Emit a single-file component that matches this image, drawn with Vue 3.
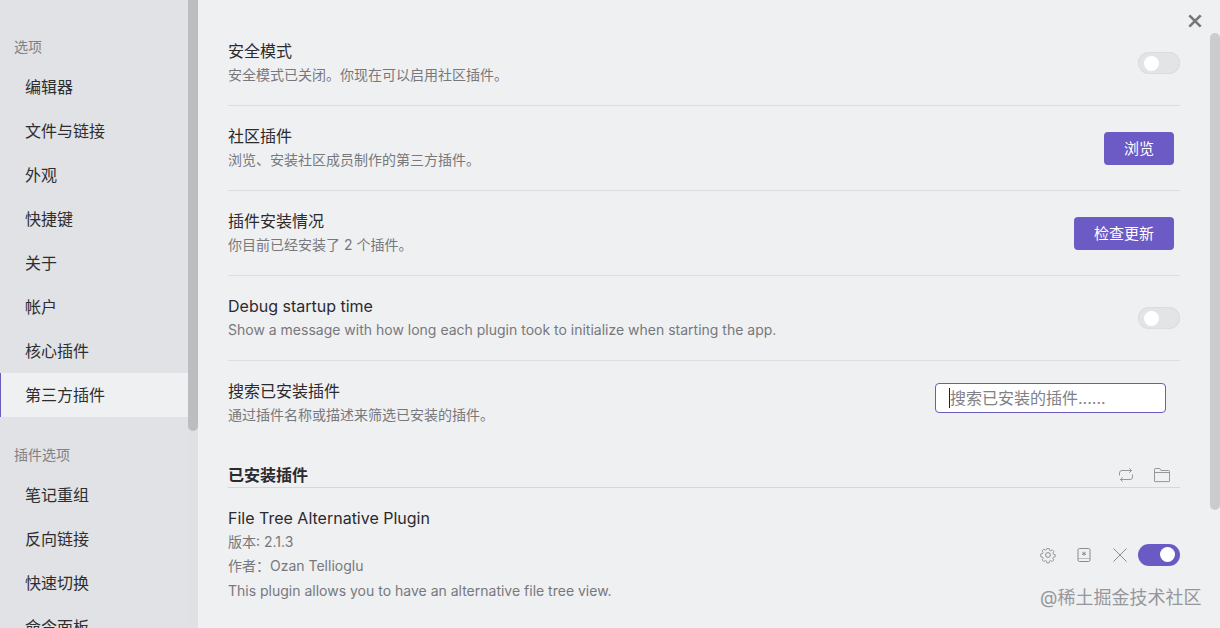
<script setup>
const options = ['编辑器', '文件与链接', '外观', '快捷键', '关于', '帐户', '核心插件', '第三方插件']
const pluginOptions = ['笔记重组', '反向链接', '快速切换', '命令面板']
const rows = [
  { title: '安全模式', desc: '安全模式已关闭。你现在可以启用社区插件。', kind: 'toggle' },
  { title: '社区插件', desc: '浏览、安装社区成员制作的第三方插件。', kind: 'button', label: '浏览' },
  { title: '插件安装情况', desc: '你目前已经安装了 2 个插件。', kind: 'button', label: '检查更新' },
  { title: 'Debug startup time', desc: 'Show a message with how long each plugin took to initialize when starting the app.', kind: 'toggle' },
  { title: '搜索已安装插件', desc: '通过插件名称或描述来筛选已安装的插件。', kind: 'search' }
]
</script>

<template>
  <div class="app">
    <aside class="side">
      <div class="group first">选项</div>
      <div v-for="o in options" :key="o" class="nav" :class="{ active: o === '第三方插件' }">{{ o }}</div>
      <div class="group second">插件选项</div>
      <div v-for="o in pluginOptions" :key="o" class="nav">{{ o }}</div>
    </aside>
    <div class="side-track"><div class="side-thumb"></div></div>
    <main class="main">
      <div v-for="r in rows" :key="r.title" class="row">
        <div class="info">
          <div class="title">{{ r.title }}</div>
          <div class="desc">{{ r.desc }}</div>
        </div>
        <div v-if="r.kind === 'toggle'" class="toggle"><span class="knob"></span></div>
        <button v-else-if="r.kind === 'button'" class="btn">{{ r.label }}</button>
        <div v-else class="search">
          <span class="caret"></span>
          <span class="placeholder">搜索已安装的插件......</span>
        </div>
      </div>
      <div class="heading">
        <span>已安装插件</span>
        <div class="heading-icons">
          <svg class="ic" viewBox="0 0 18 18" fill="none" stroke="#8b8c8f" stroke-width=".9">
            <path d="M2.5 9.5V7a2.5 2.5 0 0 1 2.5-2.5h9.5M12.3 2.3l2.2 2.2-2.2 2.2" />
            <path d="M15.5 8.5V11a2.5 2.5 0 0 1-2.5 2.5H3.5M5.7 15.7 3.5 13.5l2.2-2.2" />
          </svg>
          <svg class="ic" viewBox="0 0 18 18" fill="none" stroke="#8b8c8f" stroke-width=".9">
            <path d="M1.5 15V3.5a1 1 0 0 1 1-1h4.2l1.3 2h7.5a1 1 0 0 1 1 1V15a.6.6 0 0 1-.6.6H2.1a.6.6 0 0 1-.6-.6Z" />
            <path d="M1.5 6.5h15" />
          </svg>
        </div>
      </div>
      <div class="plugin">
        <div class="plugin-info">
          <div class="title">File Tree Alternative Plugin</div>
          <div class="meta">版本: 2.1.3</div>
          <div class="meta">作者：Ozan Tellioglu</div>
          <div class="meta">This plugin allows you to have an alternative file tree view.</div>
        </div>
        <div class="plugin-actions">
          <svg class="ic" viewBox="0 0 18 18" fill="none" stroke="#8b8c8f" stroke-width="1">
            <circle cx="9" cy="9" r="2.4" />
            <path d="M7.7 1.6h2.6l.4 2.1 1.3.6 1.8-1.2 1.9 1.9-1.2 1.8.6 1.3 2.1.4v2.6l-2.1.4-.6 1.3 1.2 1.8-1.9 1.9-1.8-1.2-1.3.6-.4 2.1H7.7l-.4-2.1-1.3-.6-1.8 1.2-1.9-1.9 1.2-1.8-.6-1.3-2.1-.4V7.7l2.1-.4.6-1.3-1.2-1.8 1.9-1.9L6 3.5l1.3-.6Z" transform="translate(1.1 1.1) scale(.878)" />
          </svg>
          <svg class="ic" viewBox="0 0 18 18" fill="none" stroke="#8b8c8f" stroke-width="1">
            <path d="M4.5 2.5h9a1.5 1.5 0 0 1 1.5 1.5v10a1.5 1.5 0 0 1-1.5 1.5h-9A1.5 1.5 0 0 1 3 14V4a1.5 1.5 0 0 1 1.5-1.5Z" />
            <path d="M3 12.5h12" stroke-opacity=".5" />
            <path d="M9 5.7v4M7.2 6.7l3.6 2M10.8 6.7l-3.6 2" />
          </svg>
          <svg class="ic" viewBox="0 0 18 18" fill="none" stroke="#8b8c8f" stroke-width="1">
            <path d="M2.5 2.5l13 13M15.5 2.5l-13 13" />
          </svg>
          <div class="toggle on"><span class="knob"></span></div>
        </div>
      </div>
    </main>
    <div class="main-track"><div class="main-thumb"></div></div>
    <svg class="close" viewBox="0 0 16 16" fill="none" stroke="#76777a" stroke-width="3">
      <path d="M1.5 1.5l13 13M14.5 1.5l-13 13" />
    </svg>
    <div class="mark">@稀土掘金技术社区</div>
  </div>
</template>

<style scoped>
.app {
  position: relative;
  display: flex;
  width: 1220px;
  height: 628px;
  overflow: hidden;
  background: #eff0f2;
  color: #2b2b2e;
  font-family: Inter, "Noto Sans CJK SC", sans-serif;
}
.side {
  flex: none;
  width: 188px;
  background: #e0e2e5;
  padding-top: 36px;
  box-sizing: border-box;
}
.group {
  height: 22px;
  line-height: 22px;
  padding-left: 14px;
  font-size: 14px;
  color: #808185;
}
.first { margin-bottom: 7px; }
.second { margin-top: 27px; margin-bottom: 7px; }
.nav {
  height: 44px;
  line-height: 44px;
  padding-left: 25px;
  font-size: 16px;
  color: #2e2e31;
}
.nav.active {
  background: #eff0f2;
  box-shadow: inset 1px 0 0 #6a5bbe;
}
.side-track {
  flex: none;
  width: 10px;
  background: #e0e1e4;
}
.side-thumb {
  height: 431px;
  background: #bcbdc0;
  border-radius: 0 0 5px 5px;
}
.main {
  flex: 1;
  min-width: 0;
  padding: 0 30px;
  box-sizing: border-box;
}
.row {
  height: 85px;
  display: flex;
  align-items: center;
  justify-content: space-between;
  box-sizing: border-box;
  border-bottom: 1px solid #dcdde0;
}
.row:first-child {
  height: 106px;
  padding-top: 21px;
}
.row:nth-child(5) {
  border-bottom: none;
  padding-bottom: 2px;
}
.title {
  font-size: 16px;
  line-height: 24px;
  color: #2b2b2e;
}
.desc {
  font-size: 14px;
  line-height: 24px;
  color: #77787c;
}
.toggle {
  flex: none;
  width: 42px;
  height: 22px;
  border-radius: 11px;
  background: #e3e4e6;
  box-shadow: inset 0 0 0 1px #dcdde0;
  display: flex;
  align-items: center;
  padding: 0 5px 0 6px;
  box-sizing: border-box;
}
.knob {
  width: 15px;
  height: 15px;
  border-radius: 50%;
  background: #fff;
}
.toggle.on {
  background: #6a5bc4;
  box-shadow: none;
  justify-content: flex-end;
  margin-left: -9px;
}
.btn {
  flex: none;
  height: 33px;
  margin-right: 6px;
  padding: 0 20px 2px;
  border: none;
  border-radius: 4px;
  background: #6c5bc5;
  color: #fff;
  font: 15px Inter, "Noto Sans CJK SC", sans-serif;
}
.search {
  position: relative;
  flex: none;
  width: 231px;
  height: 30px;
  margin-right: 14px;
  margin-bottom: 10px;
  padding-left: 14px;
  box-sizing: border-box;
  border: 1px solid #6a5bbe;
  border-radius: 4px;
  background: #fff;
  font-size: 16px;
  line-height: 28px;
  color: #808185;
}
.caret {
  position: absolute;
  left: 13px;
  top: 4px;
  width: 1px;
  height: 20px;
  background: #222;
}
.heading {
  height: 32px;
  margin-top: 10px;
  display: flex;
  align-items: center;
  justify-content: space-between;
  font-size: 16px;
  font-weight: 700;
  border-bottom: 1px solid #d6d7da;
  box-sizing: border-box;
  padding-top: 5px;
}
.heading-icons {
  display: flex;
  gap: 18px;
  margin-right: 9px;
  margin-top: 2px;
}
.ic {
  display: block;
  width: 18px;
  height: 18px;
  flex: none;
}
.plugin {
  display: flex;
  justify-content: space-between;
  align-items: center;
  padding-top: 18px;
}
.meta {
  font-size: 14px;
  line-height: 24.4px;
  color: #77787c;
}
.plugin-actions {
  display: flex;
  align-items: center;
  gap: 18px;
}
.main-track {
  flex: none;
  width: 10px;
  padding-top: 33px;
}
.main-thumb {
  height: 477px;
  background: #cbcccd;
  border-radius: 5px;
}
.close {
  position: absolute;
  left: 1188px;
  top: 14px;
  width: 14px;
  height: 14px;
}
.mark {
  position: absolute;
  left: 1040px;
  top: 585px;
  font-size: 18px;
  line-height: 26px;
  color: #96979a;
  white-space: nowrap;
}
</style>

<style>
html, body { margin: 0; overflow: hidden; }
</style>
